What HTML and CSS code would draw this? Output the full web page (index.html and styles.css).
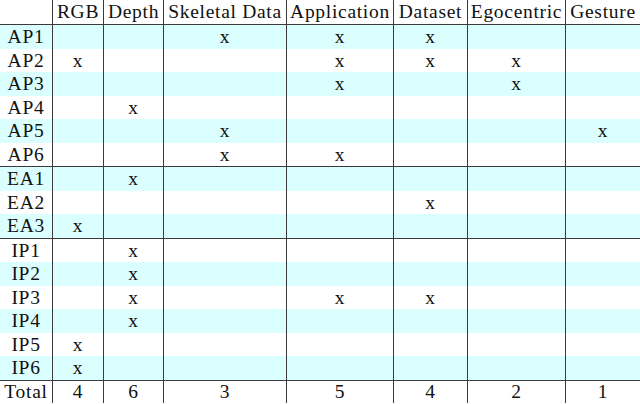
FILE: index.html
```html
<!DOCTYPE html>
<html lang="en">
<head>
    <meta charset="UTF-8">
    <meta name="viewport" content="width=device-width, initial-scale=1.0">
    <title>Approaches overview</title>
    <link rel="stylesheet" href="styles.css">
</head>
<body>
    <table class="summary">
        <colgroup>
            <col class="c-name">
            <col class="c-rgb">
            <col class="c-depth">
            <col class="c-skel">
            <col class="c-app">
            <col class="c-data">
            <col class="c-ego">
            <col class="c-gest">
        </colgroup>
        <thead>
            <tr>
                <th></th>
                <th>RGB</th>
                <th>Depth</th>
                <th>Skeletal Data</th>
                <th>Application</th>
                <th>Dataset</th>
                <th>Egocentric</th>
                <th>Gesture</th>
            </tr>
        </thead>
        <tbody class="group">
            <tr class="odd"><td>AP1</td><td></td><td></td><td>x</td><td>x</td><td>x</td><td></td><td></td></tr>
            <tr><td>AP2</td><td>x</td><td></td><td></td><td>x</td><td>x</td><td>x</td><td></td></tr>
            <tr class="odd"><td>AP3</td><td></td><td></td><td></td><td>x</td><td></td><td>x</td><td></td></tr>
            <tr><td>AP4</td><td></td><td>x</td><td></td><td></td><td></td><td></td><td></td></tr>
            <tr class="odd"><td>AP5</td><td></td><td></td><td>x</td><td></td><td></td><td></td><td>x</td></tr>
            <tr class="last"><td>AP6</td><td></td><td></td><td>x</td><td>x</td><td></td><td></td><td></td></tr>
        </tbody>
        <tbody class="group">
            <tr class="odd"><td>EA1</td><td></td><td>x</td><td></td><td></td><td></td><td></td><td></td></tr>
            <tr><td>EA2</td><td></td><td></td><td></td><td></td><td>x</td><td></td><td></td></tr>
            <tr class="odd last"><td>EA3</td><td>x</td><td></td><td></td><td></td><td></td><td></td><td></td></tr>
        </tbody>
        <tbody class="group">
            <tr><td>IP1</td><td></td><td>x</td><td></td><td></td><td></td><td></td><td></td></tr>
            <tr class="odd"><td>IP2</td><td></td><td>x</td><td></td><td></td><td></td><td></td><td></td></tr>
            <tr><td>IP3</td><td></td><td>x</td><td></td><td>x</td><td>x</td><td></td><td></td></tr>
            <tr class="odd"><td>IP4</td><td></td><td>x</td><td></td><td></td><td></td><td></td><td></td></tr>
            <tr><td>IP5</td><td>x</td><td></td><td></td><td></td><td></td><td></td><td></td></tr>
            <tr class="odd last"><td>IP6</td><td>x</td><td></td><td></td><td></td><td></td><td></td><td></td></tr>
        </tbody>
        <tfoot>
            <tr><td>Total</td><td>4</td><td>6</td><td>3</td><td>5</td><td>4</td><td>2</td><td>1</td></tr>
        </tfoot>
    </table>
</body>
</html>
```

FILE: styles.css
```css
:root {
    --stripe: #dbffff;
    --rule: #3a3a3a;
    --text: #111111;
}

body {
    margin: 0;
    padding: 0;
    background-color: #ffffff;
    color: var(--text);
    font-family: "Liberation Serif", "Times New Roman", serif;
}

.summary {
    width: 640px;
    table-layout: fixed;
    border-collapse: separate;
    border-spacing: 0;
    font-size: 19.5px;
    letter-spacing: 0.7px;
}

.c-name  { width: 52px; }
.c-rgb   { width: 51px; }
.c-depth { width: 60px; }
.c-skel  { width: 123px; }
.c-app   { width: 107px; }
.c-data  { width: 74px; }
.c-ego   { width: 98px; }
.c-gest  { width: 75px; }

.summary th,
.summary td {
    padding: 0;
    text-align: center;
    font-weight: normal;
    line-height: 1;
    height: 23.5px;
    box-sizing: border-box;
    white-space: nowrap;
    overflow: visible;
}

.summary th + th,
.summary td + td {
    border-left: 1px solid var(--rule);
}

.summary thead th {
    height: 25px;
    border-bottom: 1px solid var(--rule);
}

.summary tr.odd td {
    background-color: var(--stripe);
}

.summary tr.last td {
    height: 24.5px;
    border-bottom: 1px solid var(--rule);
}

.summary tfoot td {
    height: 22px;
}
```
